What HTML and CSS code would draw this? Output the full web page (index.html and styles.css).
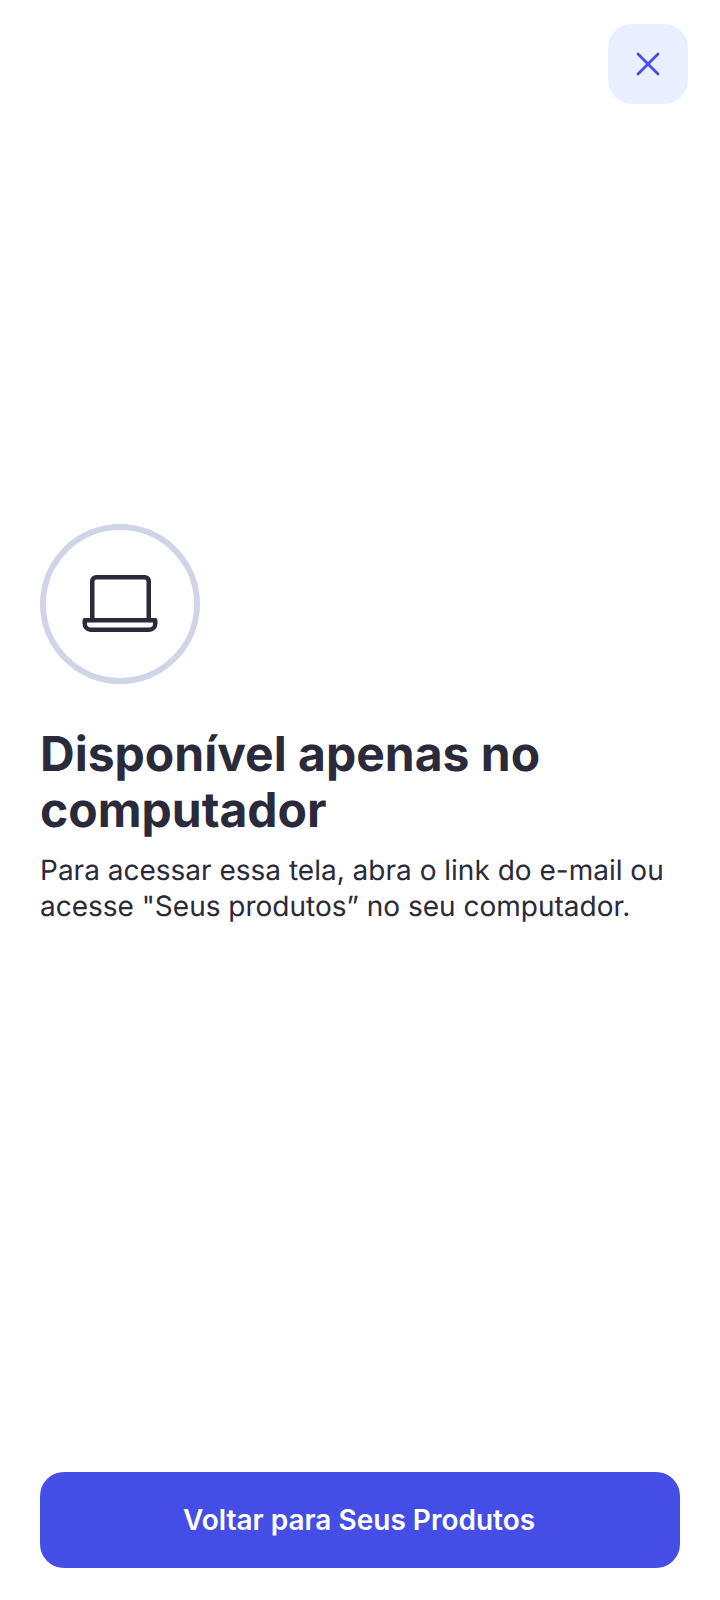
FILE: index.html
```html
<!DOCTYPE html>
<html lang="pt-BR">
<head>
<meta charset="utf-8">
<title>Disponível apenas no computador</title>
<link rel="stylesheet" href="styles.css">
</head>
<body>
<div class="page">
  <header class="top">
    <button class="close" aria-label="Fechar">
      <svg width="28" height="28" viewBox="0 0 28 28" fill="none" stroke="#444EE7" stroke-width="2.8" stroke-linecap="round"><path d="M4 4l20 20M24 4L4 24"/></svg>
    </button>
  </header>
  <main class="content">
    <div class="badge">
      <svg width="76" height="60" viewBox="0 0 76 60" fill="none" stroke="#2A2A3A" stroke-width="4.500" stroke-linejoin="round" stroke-linecap="round">
        <path d="M10.250 46V7.250a4 4 0 0 1 4-4h48.500a4 4 0 0 1 4 4V46"/>
        <path d="M2.750 46.250h70.500v3.500a6 6 0 0 1-6 6H8.750a6 6 0 0 1-6-6z"/>
      </svg>
    </div>
    <h1 class="title">Disponível apenas no computador</h1>
    <p class="text">Para acessar essa tela, abra o link do e-mail ou acesse "Seus produtos” no seu computador.</p>
  </main>
  <button class="cta"><span class="cta-label">Voltar para Seus Produtos</span></button>
</div>
</body>
</html>
```
FILE: styles.css
```css
* { box-sizing: border-box; }
html, body { margin: 0; padding: 0; background: #fff; }
body {
  font-family: Inter, "Liberation Sans", sans-serif;
  color: #2A2A3A;
  text-rendering: geometricPrecision;
}
.page {
  height: 1600px;
  padding: 24px 40px 32px;
  display: flex;
  flex-direction: column;
}
.top { display: flex; justify-content: flex-end; margin-right: -8px; }
.close {
  width: 80px;
  height: 80px;
  border: 0;
  border-radius: 24px;
  background: #E8F0FF;
  display: flex;
  align-items: center;
  justify-content: center;
  padding: 0;
}
.content { flex: 1; padding-top: 420px; }
.badge {
  width: 160px;
  height: 160px;
  border: 6px solid #D0D4E8;
  border-radius: 50%;
  display: flex;
  align-items: center;
  justify-content: center;
}
.title {
  margin: 42px 0 0;
  font-size: 48px;
  line-height: 56px;
  font-weight: 700;
  letter-spacing: 0;
}
.text {
  margin: 14px 0 0;
  font-size: 28px;
  line-height: 36px;
  font-weight: 400;
}
.cta {
  width: 640px;
  height: 96px;
  border: 0;
  border-radius: 24px;
  background: #444EE7;
  color: #fff;
  font-family: inherit;
  font-size: 28px;
  font-weight: 600;
  padding: 0 2px 0 0;
}
```
